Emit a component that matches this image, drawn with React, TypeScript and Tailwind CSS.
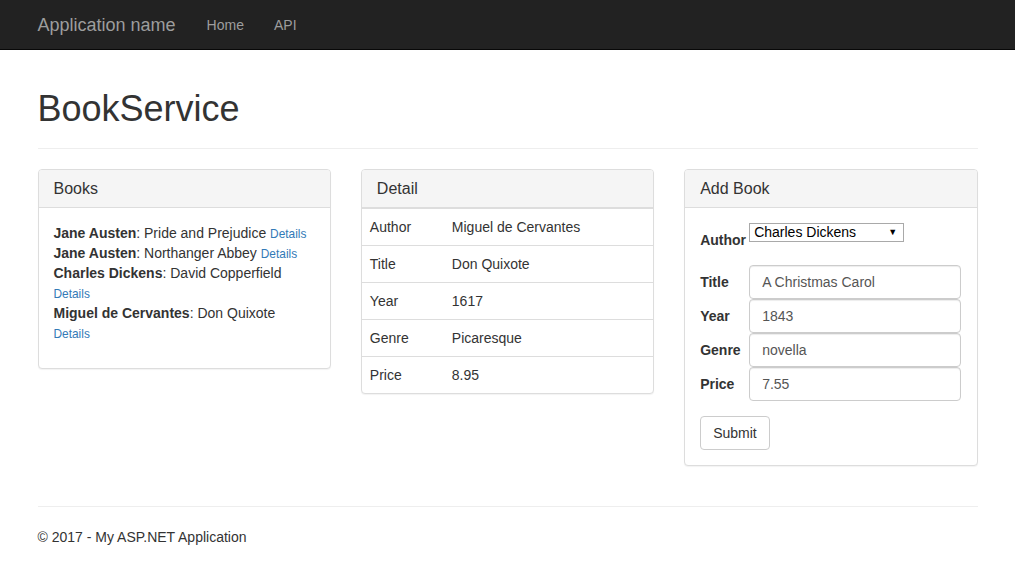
import React from 'react';

const books = [
  { author: 'Jane Austen', title: 'Pride and Prejudice' },
  { author: 'Jane Austen', title: 'Northanger Abbey' },
  { author: 'Charles Dickens', title: 'David Copperfield' },
  { author: 'Miguel de Cervantes', title: 'Don Quixote' },
];

const detail = [
  ['Author', 'Miguel de Cervantes'],
  ['Title', 'Don Quixote'],
  ['Year', '1617'],
  ['Genre', 'Picaresque'],
  ['Price', '8.95'],
];

const fields = [
  ['Title', 'A Christmas Carol'],
  ['Year', '1843'],
  ['Genre', 'novella'],
  ['Price', '7.55'],
];

// パネル共通
function Panel({ title, children }: { title: string; children: React.ReactNode }) {
  return (
    <div className="bg-white border border-[#ddd] rounded-[4px] shadow-[0_1px_1px_rgba(0,0,0,0.05)] mb-5">
      <div className="bg-[#f5f5f5] border-b border-[#ddd] rounded-t-[3px] px-[15px] py-[10px]">
        <h3 className="text-[16px] leading-[1.1] text-[#333]">{title}</h3>
      </div>
      {children}
    </div>
  );
}

export default function App() {
  return (
    <div
      className="min-h-screen bg-white text-[14px] leading-[20px] text-[#333]"
      style={{ fontFamily: '"Liberation Sans", Arial, sans-serif' }}
    >
      {/* ナビバー */}
      <nav className="h-[50px] bg-[#222] border-b border-[#080808]">
        <div className="w-[970px] mx-auto px-[15px] flex items-center h-full">
          <a className="text-[18px] leading-[20px] text-[#9d9d9d] pr-[15px] py-[15px]">Application name</a>
          <a className="text-[14px] text-[#9d9d9d] pl-[16px] pr-[15px] py-[15px]">Home</a>
          <a className="text-[14px] text-[#9d9d9d] px-[15px] py-[15px]">API</a>
        </div>
      </nav>

      <div className="w-[970px] mx-auto px-[15px] pb-5">
        {/* ページヘッダー */}
        <div className="mt-[39px] mb-5 pb-[9px] border-b border-[#eee]">
          <h1 className="text-[36px] leading-[1.1] font-normal mb-[10px]">BookService</h1>
        </div>

        <div className="grid grid-cols-3 -mx-[15px]">
          {/* 一覧 */}
          <div className="px-[15px]">
            <Panel title="Books">
              <div className="p-[15px]">
                <ul className="mb-[10px]">
                  {books.map((b, i) => (
                    <li key={i}>
                      <strong>{b.author}</strong>: {b.title}{' '}
                      <small className="text-[85%] leading-none">
                        <a className="text-[#337ab7]">Details</a>
                      </small>
                    </li>
                  ))}
                </ul>
              </div>
            </Panel>
          </div>

          {/* 詳細 */}
          <div className="px-[15px]">
            <Panel title="Detail">
              <table className="w-full border-t border-[#ddd]">
                <tbody>
                  {detail.map(([k, v], i) => (
                    <tr key={k} className={i > 0 ? 'border-t border-[#ddd]' : ''}>
                      <td className="p-2 w-[82px]">{k}</td>
                      <td className="p-2">{v}</td>
                    </tr>
                  ))}
                </tbody>
              </table>
            </Panel>
          </div>

          {/* 追加フォーム */}
          <div className="px-[15px]">
            <Panel title="Add Book">
              <div className="p-[15px]">
                <div className="flex items-start h-[42px]">
                  <label className="font-bold w-[49px] mt-[7px]">Author</label>
                  <div className="w-[155px] h-[19px] border border-[#a9a9a9] flex items-center justify-between pl-[4px] pr-[6px] text-[14px] leading-[17px] text-black">
                    <span>Charles Dickens</span>
                    <span className="text-[9px]">▼</span>
                  </div>
                </div>
                {fields.map(([k, v]) => (
                  <div key={k} className="flex items-center">
                    <label className="font-bold w-[49px]">{k}</label>
                    <input
                      readOnly
                      value={v}
                      className="w-[212px] h-[34px] px-3 py-[6px] text-[14px] text-[#555] border border-[#ccc] rounded-[4px] shadow-[inset_0_1px_1px_rgba(0,0,0,0.075)] outline-none"
                    />
                  </div>
                ))}
                <button className="mt-[15px] h-[34px] px-3 border border-[#ccc] rounded-[4px] bg-white text-[#333] text-[14px]">
                  Submit
                </button>
              </div>
            </Panel>
          </div>
        </div>

        {/* フッター */}
        <hr className="mt-5 mb-5 border-t border-[#eee]" />
        <footer>
          <p>© 2017 - My ASP.NET Application</p>
        </footer>
      </div>
    </div>
  );
}
